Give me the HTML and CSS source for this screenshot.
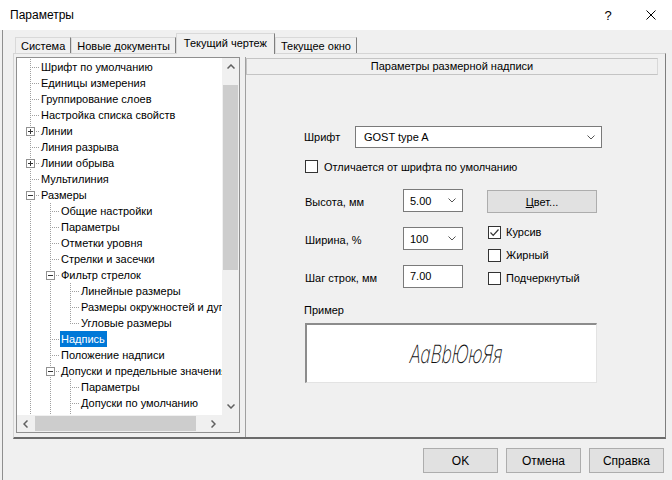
FILE: index.html
```html
<!DOCTYPE html>
<html lang="ru">
<head>
<meta charset="utf-8">
<title>Параметры</title>
<link rel="stylesheet" href="styles.css">
</head>
<body>
<div class="titlebar">
  <span class="title">Параметры</span>
  <span class="cap help">?</span>
  <span class="cap close"><svg width="10" height="10" viewBox="0 0 10 10"><path d="M0.5 0.5L9.5 9.5M9.5 0.5L0.5 9.5" stroke="#000" stroke-width="1" fill="none"/></svg></span>
</div>
<div class="client">
  <div class="tabs">
    <div class="tab">Система</div>
    <div class="tab">Новые документы</div>
    <div class="tab sel">Текущий чертеж</div>
    <div class="tab">Текущее окно</div>
  </div>
  <div class="tabpage">
    <div class="tree">
      <div class="view">
        <div class="node"><span class="c t"></span><span class="lbl">Шрифт по умолчанию</span></div>
        <div class="node"><span class="c t"></span><span class="lbl">Единицы измерения</span></div>
        <div class="node"><span class="c t"></span><span class="lbl">Группирование слоев</span></div>
        <div class="node"><span class="c t"></span><span class="lbl">Настройка списка свойств</span></div>
        <div class="node"><span class="c t"><svg class="box" width="9" height="9" viewBox="0 0 9 9"><rect x=".5" y=".5" width="8" height="8" fill="#fff" stroke="#919191"/><path d="M2 4.5h5M4.5 2v5" stroke="#333"/></svg></span><span class="lbl">Линии</span></div>
        <div class="node"><span class="c t"></span><span class="lbl">Линия разрыва</span></div>
        <div class="node"><span class="c t"><svg class="box" width="9" height="9" viewBox="0 0 9 9"><rect x=".5" y=".5" width="8" height="8" fill="#fff" stroke="#919191"/><path d="M2 4.5h5M4.5 2v5" stroke="#333"/></svg></span><span class="lbl">Линии обрыва</span></div>
        <div class="node"><span class="c t"></span><span class="lbl">Мультилиния</span></div>
        <div class="node"><span class="c t"><svg class="box" width="9" height="9" viewBox="0 0 9 9"><rect x=".5" y=".5" width="8" height="8" fill="#fff" stroke="#919191"/><path d="M2 4.5h5" stroke="#333"/></svg></span><span class="lbl">Размеры</span></div>
        <div class="node"><span class="g v"></span><span class="c t"></span><span class="lbl">Общие настройки</span></div>
        <div class="node"><span class="g v"></span><span class="c t"></span><span class="lbl">Параметры</span></div>
        <div class="node"><span class="g v"></span><span class="c t"></span><span class="lbl">Отметки уровня</span></div>
        <div class="node"><span class="g v"></span><span class="c t"></span><span class="lbl">Стрелки и засечки</span></div>
        <div class="node"><span class="g v"></span><span class="c t"><svg class="box" width="9" height="9" viewBox="0 0 9 9"><rect x=".5" y=".5" width="8" height="8" fill="#fff" stroke="#919191"/><path d="M2 4.5h5" stroke="#333"/></svg></span><span class="lbl">Фильтр стрелок</span></div>
        <div class="node"><span class="g v"></span><span class="g v"></span><span class="c t"></span><span class="lbl">Линейные размеры</span></div>
        <div class="node"><span class="g v"></span><span class="g v"></span><span class="c t"></span><span class="lbl">Размеры окружностей и дуг</span></div>
        <div class="node"><span class="g v"></span><span class="g v"></span><span class="c l"></span><span class="lbl">Угловые размеры</span></div>
        <div class="node"><span class="g v"></span><span class="c t"></span><span class="lbl selected">Надпись</span></div>
        <div class="node"><span class="g v"></span><span class="c t"></span><span class="lbl">Положение надписи</span></div>
        <div class="node"><span class="g v"></span><span class="c t"><svg class="box" width="9" height="9" viewBox="0 0 9 9"><rect x=".5" y=".5" width="8" height="8" fill="#fff" stroke="#919191"/><path d="M2 4.5h5" stroke="#333"/></svg></span><span class="lbl">Допуски и предельные значения</span></div>
        <div class="node"><span class="g v"></span><span class="g v"></span><span class="c t"></span><span class="lbl">Параметры</span></div>
        <div class="node"><span class="g v"></span><span class="g v"></span><span class="c t"></span><span class="lbl">Допуски по умолчанию</span></div>
        <div class="node"><span class="g v"></span><span class="g v"></span><span class="c t"></span><span class="lbl"></span></div>
      </div>
      <div class="vscroll">
        <div class="sb-btn"><svg width="8" height="5" viewBox="0 0 8 5"><path d="M0.5 4.5L4 1L7.5 4.5" stroke="#606060" stroke-width="1.5" fill="none"/></svg></div>
        <div class="vtrack"><div class="vthumb"></div></div>
        <div class="sb-btn"><svg width="8" height="5" viewBox="0 0 8 5"><path d="M0.5 0.5L4 4L7.5 0.5" stroke="#606060" stroke-width="1.5" fill="none"/></svg></div>
      </div>
      <div class="hscroll">
        <div class="sb-btn h"><svg width="5" height="8" viewBox="0 0 5 8"><path d="M4.5 0.5L1 4L4.5 7.5" stroke="#606060" stroke-width="1.5" fill="none"/></svg></div>
        <div class="htrack"><div class="hthumb"></div></div>
        <div class="sb-btn h"><svg width="5" height="8" viewBox="0 0 5 8"><path d="M0.5 0.5L4 4L0.5 7.5" stroke="#606060" stroke-width="1.5" fill="none"/></svg></div>
      </div>
      <div class="corner"></div>
    </div>
    <div class="panel">
      <div class="panel-head">Параметры размерной надписи</div>
      <div class="form">
        <div class="row-font">
          <span class="flabel">Шрифт</span>
          <div class="combo wide"><span>GOST type A</span><svg width="8" height="5" viewBox="0 0 8 5"><path d="M0.5 0.5L4 4L7.5 0.5" stroke="#555" fill="none"/></svg></div>
        </div>
        <div class="row-check">
          <span class="cb"></span><span>Отличается от шрифта по умолчанию</span>
        </div>
        <div class="fields">
          <div class="fgrid">
            <span class="glabel">Высота, мм</span>
            <div class="combo"><span>5.00</span><svg width="8" height="5" viewBox="0 0 8 5"><path d="M0.5 0.5L4 4L7.5 0.5" stroke="#555" fill="none"/></svg></div>
            <span class="glabel">Ширина, %</span>
            <div class="combo"><span>100</span><svg width="8" height="5" viewBox="0 0 8 5"><path d="M0.5 0.5L4 4L7.5 0.5" stroke="#555" fill="none"/></svg></div>
            <span class="glabel">Шаг строк, мм</span>
            <div class="edit">7.00</div>
          </div>
          <div class="fside">
            <div class="btn color"><span><u>Ц</u>вет...</span></div>
            <div class="chk first"><span class="cb"><svg width="11" height="11" viewBox="0 0 11 11"><path d="M1.5 5.5L4.2 8.3L9.5 2.5" stroke="#333" stroke-width="1.2" fill="none"/></svg></span><span>Курсив</span></div>
            <div class="chk"><span class="cb"></span><span>Жирный</span></div>
            <div class="chk"><span class="cb"></span><span>Подчеркнутый</span></div>
          </div>
        </div>
        <div class="sample-label">Пример</div>
        <div class="sample"><span class="sample-text">AaBbЮюЯя</span></div>
      </div>
    </div>
  </div>
  <div class="buttons">
    <div class="btn">OK</div>
    <div class="btn">Отмена</div>
    <div class="btn">Справка</div>
  </div>
</div>
</body>
</html>
```
FILE: styles.css
```css
* { box-sizing: border-box; }
html, body { margin: 0; }
body {
  width: 672px;
  height: 480px;
  overflow: hidden;
  background: #f0f0f0;
  font: 11px "Liberation Sans", Arial, sans-serif;
  color: #000;
}

.titlebar {
  height: 30px;
  background: #fff;
  display: flex;
  align-items: center;
  font-size: 12px;
}
.title { flex: 1; padding-left: 10px; }
.cap {
  width: 44px;
  height: 30px;
  display: flex;
  align-items: center;
  justify-content: center;
  font-size: 13px;
}
.close { width: 42px; }

.client {
  margin-left: 2px;
  border-left: 1px solid #8f8f8f;
  height: 450px;
}

.tabs {
  display: flex;
  align-items: flex-end;
  height: 23px;
  padding: 3px 0 0 12px;
}
.tab {
  height: 16px;
  padding: 0 5px;
  line-height: 16px;
  white-space: nowrap;
  border: 1px solid #d9d9d9;
  border-bottom: 0;
  border-right-color: #7e7e7e;
  background: #f0f0f0;
}
.tab.sel {
  height: 21px;
  margin-bottom: -1px;
  line-height: 18px;
  position: relative;
  padding: 0 7px;
}

.tabpage {
  margin-left: 10px;
  width: 653px;
  height: 386px;
  border-style: solid;
  border-width: 1px 1px 2px 1px;
  border-color: #d5d5d5 #7e7e7e #6b6b6b #d5d5d5;
  padding: 3px 0 0 2px;
  display: flex;
  gap: 5px;
}

/* tree */
.tree {
  width: 224px;
  height: 376px;
  border: 1px solid #8f8f8f;
  background: #fff;
  display: grid;
  grid-template-columns: 205px 17px;
  grid-template-rows: 357px 17px;
}
.view {
  overflow: hidden;
  padding: 1px 0 0 3px;
}
.node {
  display: flex;
  height: 16px;
  white-space: nowrap;
}
.g, .c {
  width: 20px;
  height: 16px;
  flex: none;
  display: flex;
  align-items: flex-start;
  padding: 4px 0 0 6px;
}
.g.v {
  background: repeating-linear-gradient(#a0a0a0 0 1px, transparent 1px 2px) 10px 0 / 1px 16px no-repeat;
}
.c.t {
  background:
    repeating-linear-gradient(#a0a0a0 0 1px, transparent 1px 2px) 10px 0 / 1px 16px no-repeat,
    repeating-linear-gradient(to right, #a0a0a0 0 1px, transparent 1px 2px) 12px 8px / 8px 1px no-repeat;
}
.c.l {
  background:
    repeating-linear-gradient(#a0a0a0 0 1px, transparent 1px 2px) 10px 0 / 1px 9px no-repeat,
    repeating-linear-gradient(to right, #a0a0a0 0 1px, transparent 1px 2px) 12px 8px / 8px 1px no-repeat;
}
.box { display: block; }
.lbl {
  line-height: 16px;
  padding: 0 2px 0 1px;
}
.lbl.selected {
  background: #0078d7;
  color: #fff;
}

.vscroll {
  display: flex;
  flex-direction: column;
  background: #f0f0f0;
}
.sb-btn {
  height: 17px;
  flex: none;
  display: flex;
  align-items: center;
  justify-content: center;
}
.sb-btn.h { width: 17px; height: 17px; }
.vtrack { flex: 1; padding: 10px 1px 0; }
.vthumb { height: 185px; background: #cdcdcd; }
.hscroll {
  display: flex;
  background: #f0f0f0;
}
.htrack { flex: 1; padding: 1px 0 1px 1px; }
.hthumb { width: 161px; height: 15px; background: #cdcdcd; }
.corner { background: #f0f0f0; }

/* right panel */
.panel {
  flex: 1;
  border-left: 1px solid #a0a0a0;
  padding-top: 1px;
}
.panel-head {
  margin-right: 7px;
  height: 17px;
  border: 1px solid #c4c4c4;
  border-right-color: #d8d8d8;
  text-align: center;
  line-height: 15px;
}
.form { padding-left: 58px; }
.row-font {
  display: flex;
  align-items: center;
  margin-top: 51px;
}
.flabel { width: 51px; }
.combo {
  height: 23px;
  border: 1px solid #7a7a7a;
  background: #fff;
  display: flex;
  align-items: center;
  justify-content: space-between;
  padding: 0 6px 0 6px;
}
.combo.wide {
  width: 247px;
  height: 22px;
  padding-left: 8px;
}
.row-check {
  display: flex;
  align-items: center;
  gap: 6px;
  margin-top: 12px;
  padding-left: 1px;
}
.cb {
  width: 13px;
  height: 13px;
  border: 1px solid #333;
  background: #fff;
  flex: none;
  display: flex;
  align-items: center;
  justify-content: center;
}

.fields {
  display: flex;
  margin-top: 16px;
}
.fgrid {
  display: grid;
  grid-template-columns: 99px 60px;
  grid-auto-rows: 23px;
  row-gap: 15px;
  align-items: center;
}
.glabel { padding-top: 3px; padding-left: 1px; }
.edit {
  height: 23px;
  border: 1px solid #7a7a7a;
  background: #fff;
  padding-left: 6px;
  line-height: 20px;
}
.fside {
  margin-left: 24px;
  width: 110px;
}
.btn {
  height: 25px;
  width: 75px;
  border: 1px solid #adadad;
  background: #e1e1e1;
  display: flex;
  align-items: center;
  justify-content: center;
  font-size: 12px;
}
.btn.color {
  width: 110px;
  height: 23px;
  margin-top: 1px;
  font-size: 11px;
}
.chk {
  display: flex;
  align-items: center;
  gap: 5px;
  height: 16px;
  margin-top: 7px;
  padding-left: 1px;
}
.chk.first { margin-top: 11px; }

.sample-label {
  margin-top: 15px;
  line-height: 14px;
}
.sample {
  margin: 6px 0 0 1px;
  width: 292px;
  height: 60px;
  background: #fff;
  border-style: solid;
  border-width: 2px 1px 1px 2px;
  border-color: #8c8c8c #e3e3e3 #e3e3e3 #8c8c8c;
  display: flex;
  align-items: center;
  justify-content: center;
  padding-left: 9px;
}
.sample-text {
  display: inline-block;
  font-family: Inter, "DejaVu Sans", sans-serif;
  font-weight: 200;
  font-style: italic;
  font-size: 25px;
  transform: scaleX(0.68) skewX(-6deg);
  color: #111;
}

.buttons {
  display: flex;
  justify-content: flex-end;
  gap: 8px;
  margin-top: 9px;
  padding-right: 8px;
}
```
